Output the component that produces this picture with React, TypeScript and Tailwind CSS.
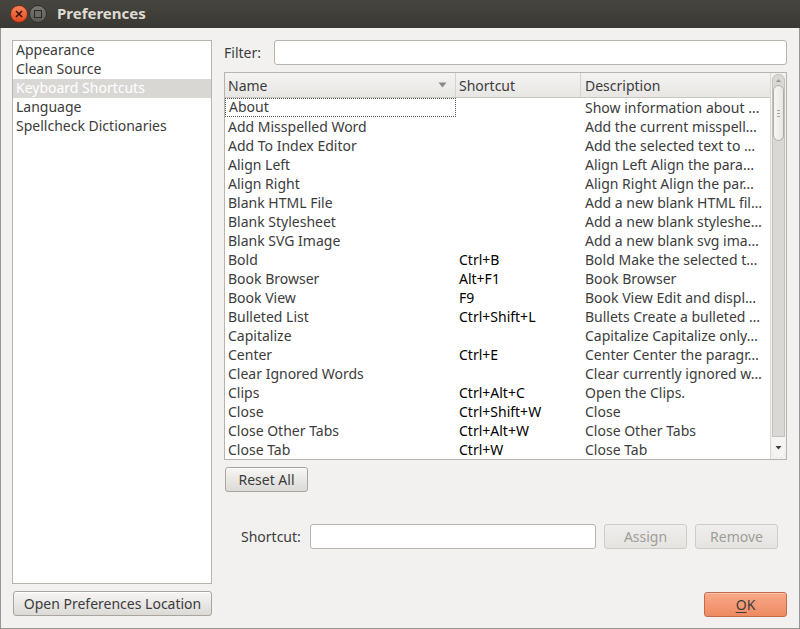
import React from 'react';

const rows: [string, string, string][] = [
  ['About', '', 'Show information about …'],
  ['Add Misspelled Word', '', 'Add the current misspell…'],
  ['Add To Index Editor', '', 'Add the selected text to …'],
  ['Align Left', '', 'Align Left Align the para…'],
  ['Align Right', '', 'Align Right Align the par…'],
  ['Blank HTML File', '', 'Add a new blank HTML fil…'],
  ['Blank Stylesheet', '', 'Add a new blank styleshe…'],
  ['Blank SVG Image', '', 'Add a new blank svg ima…'],
  ['Bold', 'Ctrl+B', 'Bold Make the selected t…'],
  ['Book Browser', 'Alt+F1', 'Book Browser'],
  ['Book View', 'F9', 'Book View Edit and displ…'],
  ['Bulleted List', 'Ctrl+Shift+L', 'Bullets Create a bulleted …'],
  ['Capitalize', '', 'Capitalize Capitalize only…'],
  ['Center', 'Ctrl+E', 'Center Center the paragr…'],
  ['Clear Ignored Words', '', 'Clear currently ignored w…'],
  ['Clips', 'Ctrl+Alt+C', 'Open the Clips.'],
  ['Close', 'Ctrl+Shift+W', 'Close'],
  ['Close Other Tabs', 'Ctrl+Alt+W', 'Close Other Tabs'],
  ['Close Tab', 'Ctrl+W', 'Close Tab'],
];

const pages = ['Appearance', 'Clean Source', 'Keyboard Shortcuts', 'Language', 'Spellcheck Dictionaries'];

function Button({ label, className = '', disabled = false }: { label: React.ReactNode; className?: string; disabled?: boolean }) {
  return (
    <div
      className={`h-[25px] flex items-center justify-center rounded-[3px] border ${
        disabled
          ? 'border-[#cfccc7] bg-gradient-to-b from-[#efeeec] to-[#e6e4e1] text-[#a09d98]'
          : 'border-[#a8a49e] bg-gradient-to-b from-[#f7f6f5] to-[#dcdad6] text-[#3c3c3c] shadow-[inset_0_1px_0_#fff]'
      } ${className}`}
    >
      {label}
    </div>
  );
}

export default function App() {
  return (
    <div
      className="w-[800px] h-[629px] flex flex-col bg-[#f2f1f0] text-[14px] text-[#3c3c3c] overflow-hidden"
      style={{ fontFamily: '"Noto Sans", "Open Sans", sans-serif' }}
    >
      {/* title bar */}
      <div className="h-[28px] shrink-0 flex items-center bg-gradient-to-b from-[#46453f] to-[#3a3935] pl-[10px]">
        <div className="w-[18px] h-[18px] rounded-full bg-gradient-to-b from-[#f58358] to-[#e3471c] border border-[#7a2c12] flex items-center justify-center">
          <svg width="8" height="8" viewBox="0 0 8 8">
            <path d="M1 1 L7 7 M7 1 L1 7" stroke="#3a1206" strokeWidth="1.6" />
          </svg>
        </div>
        <div className="w-[18px] h-[18px] ml-[1px] rounded-full bg-gradient-to-b from-[#7a7872] to-[#5c5a55] border border-[#2e2d2a] flex items-center justify-center">
          <div className="w-[8px] h-[8px] border-[1.5px] border-[#2b2a27] bg-[#6b6964]" />
        </div>
        <span className="ml-[10px] -mt-[1px] font-bold text-[15px] text-[#dfdbd2]">Preferences</span>
      </div>

      {/* body */}
      <div className="flex-1 flex flex-col border-x border-b border-[#9a968f] pl-[11px] pr-[12px] pt-[12px] pb-[11px]">
        <div className="flex-1 flex gap-[12px]">
          {/* left column */}
          <div className="w-[200px] flex flex-col">
            <div className="h-[544px] bg-white border border-[#b8b4ad]">
              {pages.map((p) => (
                <div
                  key={p}
                  className={`h-[19px] leading-[18px] pl-[3px] ${p === 'Keyboard Shortcuts' ? 'bg-[#d9d7d4] text-white' : ''}`}
                >
                  {p}
                </div>
              ))}
            </div>
            <Button label="Open Preferences Location" className="mt-[7px] ml-[1px] w-[199px]" />
          </div>

          {/* right column */}
          <div className="flex-1 flex flex-col">
            <div className="flex items-center h-[25px]">
              <span className="w-[50px]">Filter:</span>
              <div className="flex-1 h-[25px] bg-white border border-[#b8b4ad] rounded-[3px]" />
            </div>

            <div className="mt-[7px] h-[388px] flex border border-[#b8b4ad] bg-white">
              <div className="flex-1 flex flex-col">
                <div className="h-[25px] flex bg-gradient-to-b from-[#f4f3f2] to-[#e8e6e3] border-b border-[#c9c6c1]">
                  <div className="w-[231px] flex items-center justify-between pl-[3px] pr-[8px] border-r border-[#d6d3ce]">
                    <span>Name</span>
                    <svg width="9" height="6" viewBox="0 0 9 6">
                      <path d="M0.5 0.5 H8.5 L4.5 5.5 Z" fill="#8b8883" />
                    </svg>
                  </div>
                  <div className="w-[125px] flex items-center pl-[3px] border-r border-[#d6d3ce]">Shortcut</div>
                  <div className="flex-1 flex items-center pl-[4px]">Description</div>
                </div>
                {rows.map(([name, sc, desc], i) => (
                  <div key={name} className="h-[19px] leading-[18px] flex">
                    <div
                      className={`w-[231px] pl-[3px] truncate ${i === 0 ? 'border border-dotted border-[#555] pl-[2px] leading-[16px]' : 'pt-[1px]'}`}
                    >
                      {name}
                    </div>
                    <div className="w-[125px] pl-[3px] pt-[1px] text-black">{sc}</div>
                    <div className="flex-1 pl-[4px] pr-[2px] pt-[1px] whitespace-nowrap overflow-hidden">{desc}</div>
                  </div>
                ))}
              </div>

              {/* scrollbar */}
              <div className="w-[16px] border-l border-[#dcd9d5] bg-[#f2f1f0] flex justify-center py-[1px]">
                <div className="w-[13px] h-full rounded-[6px] border border-[#c4c1bc] bg-[#dad8d4] flex flex-col items-center">
                  <svg width="7" height="10" viewBox="0 0 7 10" className="shrink-0">
                    <path d="M1 7 L3.5 4 L6 7 Z" fill="#9a978f" />
                  </svg>
                  <div className="w-[11px] h-[56px] rounded-[6px] border border-[#b0ada7] bg-gradient-to-r from-[#f7f6f5] to-[#e9e7e4] flex flex-col items-center justify-center gap-[2px]">
                    <div className="w-[3px] h-px bg-[#aaa7a1]" />
                    <div className="w-[3px] h-px bg-[#aaa7a1]" />
                    <div className="w-[3px] h-px bg-[#aaa7a1]" />
                  </div>
                  <div className="flex-1" />
                  <div className="w-[13px] h-[22px] -mb-[1px] rounded-b-[6px] border-t border-[#c4c1bc] bg-[#f5f4f3] flex items-center justify-center">
                    <svg width="7" height="5" viewBox="0 0 7 5">
                      <path d="M0.5 1 H6.5 L3.5 4.5 Z" fill="#3c3c3c" />
                    </svg>
                  </div>
                </div>
              </div>
            </div>

            <Button label="Reset All" className="mt-[7px] ml-[1px] w-[83px]" />

            <div className="mt-[32px] flex items-center h-[25px]">
              <span className="ml-[17px] w-[69px]">Shortcut:</span>
              <div className="w-[286px] h-[25px] bg-white border border-[#b8b4ad] rounded-[3px]" />
              <Button label="Assign" disabled className="ml-[8px] w-[83px]" />
              <Button label="Remove" disabled className="ml-[8px] w-[83px]" />
            </div>

            <div className="flex-1" />
            <div className="flex justify-end">
              <div className="w-[83px] h-[25px] flex items-center justify-center rounded-[3px] border border-[#c66a4a] bg-gradient-to-b from-[#f8a988] to-[#ee8a62] text-[#3c3c3c] shadow-[inset_0_1px_0_#fbc6b0]">
                <span>
                  <span className="underline underline-offset-2">O</span>K
                </span>
              </div>
            </div>
          </div>
        </div>
      </div>
    </div>
  );
}
